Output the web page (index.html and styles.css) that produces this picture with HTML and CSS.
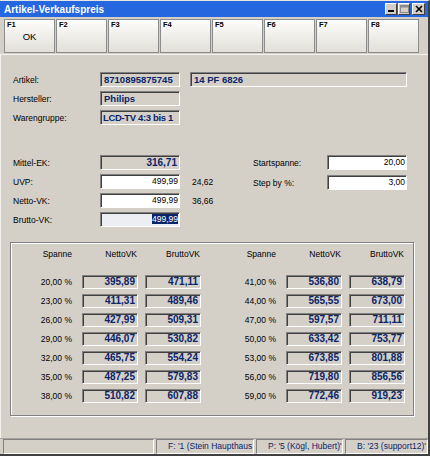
FILE: index.html
```html
<!DOCTYPE html>
<html lang="de">
  <head>
    <meta charset="UTF-8" />
    <title>Artikel-Verkaufspreis</title>
    <link rel="stylesheet" href="styles.css">
  </head>
  <body>
    <div class="window">
      <!-- Titelleiste -->
      <div class="titlebar">
        <span class="title">Artikel-Verkaufspreis</span>
        <div class="tbtns">
          <span class="tbtn"><svg width="8" height="8" viewBox="0 0 8 8"><rect x="1" y="5" width="6" height="2" fill="#000"/></svg></span>
          <span class="tbtn"><svg width="9" height="8" viewBox="0 0 9 8"><rect x="0.5" y="0.5" width="8" height="7" fill="none" stroke="#8a8a8a"/><rect x="0.5" y="0.5" width="8" height="2" fill="#8a8a8a"/></svg></span>
          <span class="tbtn close"><svg width="8" height="8" viewBox="0 0 8 8"><path d="M1 1 L7 7 M7 1 L1 7" stroke="#000" stroke-width="1.6"/></svg></span>
        </div>
      </div>

      <!-- Funktionstasten -->
      <div class="fkeys">
        <div class="fkey"><span class="fkey-nr">F1</span><span class="fkey-text">OK</span></div>
        <div class="fkey"><span class="fkey-nr">F2</span></div>
        <div class="fkey"><span class="fkey-nr">F3</span></div>
        <div class="fkey"><span class="fkey-nr">F4</span></div>
        <div class="fkey"><span class="fkey-nr">F5</span></div>
        <div class="fkey"><span class="fkey-nr">F6</span></div>
        <div class="fkey"><span class="fkey-nr">F7</span></div>
        <div class="fkey"><span class="fkey-nr">F8</span></div>
      </div>

      <div class="inhalt">
        <!-- Artikeldaten -->
        <div class="artikel">
          <span>Artikel:</span>
          <div class="feld ro">8710895875745</div>
          <div class="feld ro lang">14 PF 6826</div>
          <span>Hersteller:</span>
          <div class="feld ro">Philips</div>
          <span></span>
          <span>Warengruppe:</span>
          <div class="feld ro eng">LCD-TV 4:3 bis 1</div>
          <span></span>
        </div>

        <!-- Preise -->
        <div class="preise">
          <div class="preise-links">
            <span>Mittel-EK:</span>
            <div class="feld ro rechts">316,71</div>
            <span></span>
            <span>UVP:</span>
            <div class="feld weiss">499,99</div>
            <span class="extra">24,62</span>
            <span>Netto-VK:</span>
            <div class="feld weiss">499,99</div>
            <span class="extra">36,66</span>
            <span>Brutto-VK:</span>
            <div class="feld weiss markiert"><span class="auswahl">499,99</span></div>
            <span></span>
          </div>
          <div class="preise-rechts">
            <span>Startspanne:</span>
            <div class="feld weiss">20,00</div>
            <span>Step by %:</span>
            <div class="feld weiss">3,00</div>
          </div>
        </div>

        <!-- Spannen-Tabelle -->
        <div class="gruppe">
          <div class="tabelle">
            <span class="sp kopf">Spanne</span>
            <span class="kopf spalte">NettoVK</span>
            <span class="kopf spalte">BruttoVK</span>
            <span class="sp kopf">Spanne</span>
            <span class="kopf spalte">NettoVK</span>
            <span class="kopf spalte">BruttoVK</span>

            <span class="sp">20,00 %</span><div class="feld ro wert">395,89</div><div class="feld ro wert">471,11</div>
            <span class="sp">41,00 %</span><div class="feld ro wert">536,80</div><div class="feld ro wert">638,79</div>

            <span class="sp">23,00 %</span><div class="feld ro wert">411,31</div><div class="feld ro wert">489,46</div>
            <span class="sp">44,00 %</span><div class="feld ro wert">565,55</div><div class="feld ro wert">673,00</div>

            <span class="sp">26,00 %</span><div class="feld ro wert">427,99</div><div class="feld ro wert">509,31</div>
            <span class="sp">47,00 %</span><div class="feld ro wert">597,57</div><div class="feld ro wert">711,11</div>

            <span class="sp">29,00 %</span><div class="feld ro wert">446,07</div><div class="feld ro wert">530,82</div>
            <span class="sp">50,00 %</span><div class="feld ro wert">633,42</div><div class="feld ro wert">753,77</div>

            <span class="sp">32,00 %</span><div class="feld ro wert">465,75</div><div class="feld ro wert">554,24</div>
            <span class="sp">53,00 %</span><div class="feld ro wert">673,85</div><div class="feld ro wert">801,88</div>

            <span class="sp">35,00 %</span><div class="feld ro wert">487,25</div><div class="feld ro wert">579,83</div>
            <span class="sp">56,00 %</span><div class="feld ro wert">719,80</div><div class="feld ro wert">856,56</div>

            <span class="sp">38,00 %</span><div class="feld ro wert">510,82</div><div class="feld ro wert">607,88</div>
            <span class="sp">59,00 %</span><div class="feld ro wert">772,46</div><div class="feld ro wert">919,23</div>
          </div>
        </div>
      </div>

      <!-- Statusleiste -->
      <div class="statusleiste">
        <div class="panel p1"></div>
        <div class="panel p2">F: '1 (Stein Haupthaus</div>
        <div class="panel p3">P: '5 (Kögl, Hubert)'</div>
        <div class="panel p4">B: '23 (support12)'</div>
      </div>
    </div>
  </body>
</html>
```

FILE: styles.css
```css
/* Grundlayout */
body {
  margin: 0;
  background: #fff;
}

.window {
  width: 428px;
  height: 453px;
  background: #d4d0c8;
  border-top: 1px solid #e8e6e2;
  border-right: 2px solid #404040;
  border-bottom: 2px solid #404040;
  display: flex;
  flex-direction: column;
  font-family: "Liberation Sans", Arial, sans-serif;
  font-size: 8.5px;
  color: #000;
  overflow: hidden;
}

/* Titelleiste */
.titlebar {
  height: 16px;
  background: #2567de;
  display: flex;
  align-items: center;
  padding: 0 3px 0 4px;
}

.title {
  color: #fff;
  font-weight: bold;
  font-size: 10px;
}

.tbtns {
  margin-left: auto;
  display: flex;
  gap: 1px;
}

.tbtn {
  width: 10px;
  height: 10px;
  background: #d4d0c8;
  border: 1px solid;
  border-color: #fff #404040 #404040 #fff;
  display: flex;
  align-items: center;
  justify-content: center;
}

.tbtn.close {
  margin-left: 1px;
  width: 11px;
}

/* Funktionstasten */
.fkeys {
  display: flex;
  gap: 1px;
  padding-left: 4px;
  margin-top: 2px;
  height: 34px;
}

.fkey {
  width: 51px;
  box-sizing: border-box;
  border: 1px solid #8c8c8c;
  background: linear-gradient(#fdfdfc, #e2dfd8);
  display: flex;
  flex-direction: column;
  padding: 1px 2px;
}

.fkey-nr {
  font-size: 7.5px;
  font-weight: bold;
  line-height: 8px;
}

.fkey-text {
  text-align: center;
  font-size: 9.5px;
  line-height: 12px;
  margin-top: 2px;
}

/* Formularbereich mit hellem Rand */
.inhalt {
  flex: 1;
  margin-top: 1px;
  border-top: 1px solid #f4f2ee;
  border-left: 1px solid #f4f2ee;
}

/* Eingabefelder */
.feld {
  box-sizing: border-box;
  height: 15px;
  border: 1px solid;
  border-color: #808080 #fff #fff #808080;
  box-shadow: inset 1px 1px #404040;
  line-height: 13px;
  padding: 0 2px 0 3px;
  white-space: nowrap;
  overflow: hidden;
}

.ro {
  background: #d4d0c8;
  color: #0a246a;
  font-weight: bold;
  font-size: 10px;
}

.artikel .ro {
  font-size: 9.5px;
}

.eng {
  padding-left: 2px;
  letter-spacing: -0.35px;
}

.rechts {
  text-align: right;
}

.weiss {
  background: #fff;
  text-align: right;
  font-size: 8.5px;
  padding-right: 1px;
}

.markiert {
  background: #eceef4;
}

.auswahl {
  background: #0a246a;
  color: #fff;
}

.lang {
  margin-left: 10px;
  width: 217px;
}

/* Artikelbereich */
.artikel {
  display: grid;
  grid-template-columns: 87px 80px 227px;
  grid-auto-rows: 15px;
  row-gap: 4px;
  align-items: center;
  padding-left: 12px;
  margin-top: 17px;
}

/* Preisbereich */
.preise {
  display: flex;
  margin-top: 30px;
  padding-left: 12px;
}

.preise-links {
  width: 240px;
  display: grid;
  grid-template-columns: 87px 80px auto;
  grid-auto-rows: 15px;
  row-gap: 4px;
  align-items: center;
}

.extra {
  padding-left: 12px;
}

.preise-rechts {
  display: grid;
  grid-template-columns: 74px 80px;
  grid-auto-rows: 15px;
  row-gap: 5px;
  align-items: center;
  align-content: start;
}

/* Spannen-Gruppe */
.gruppe {
  margin: 15px 0 0 9px;
  width: 404px;
  height: 174px;
  box-sizing: border-box;
  border: 1px solid #808080;
  box-shadow: inset 1px 1px #fff, 1px 1px #fff;
  padding: 5px 0 0 1px;
}

.tabelle {
  display: grid;
  grid-template-columns: 70px 63px 56px 85px 63px 56px;
  grid-template-rows: 22px repeat(7, 14px);
  row-gap: 5px;
}

.sp {
  text-align: right;
  padding-right: 10px;
  line-height: 14px;
}

.kopf {
  line-height: 12px;
}

.spalte {
  width: 56px;
  box-sizing: border-box;
  text-align: right;
  padding-right: 1px;
}

.wert {
  width: 56px;
  height: 14px;
  line-height: 12px;
  text-align: right;
  padding-right: 2px;
}

/* Statusleiste */
.statusleiste {
  height: 16px;
  box-sizing: border-box;
  border-top: 1px solid #a8a49c;
  display: flex;
  gap: 2px;
  padding-left: 3px;
}

.panel {
  box-sizing: border-box;
  border: 1px solid;
  border-color: #808080 #fff #fff #808080;
  padding-left: 11px;
  line-height: 13px;
  color: #0a246a;
  white-space: nowrap;
  overflow: hidden;
}

.p1 { width: 151px; }
.p2 { width: 98px; }
.p3 { width: 87px; }
.p4 { width: 83px; }
```
